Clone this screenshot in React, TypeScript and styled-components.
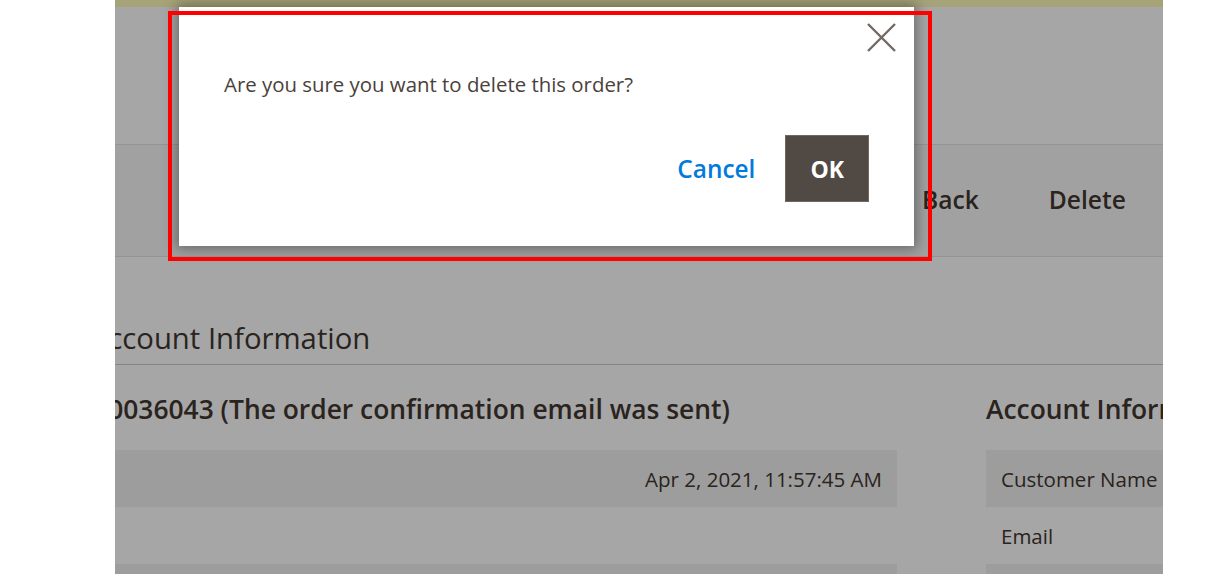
import React from 'react'
import styled, { createGlobalStyle } from 'styled-components'

const GlobalStyle = createGlobalStyle`
  html, body {
    margin: 0;
    padding: 0;
    background: #ffffff;
  }
  body {
    font-family: "Open Sans", "Noto Sans", sans-serif;
    color: #41362f;
  }
`

const Stage = styled.div`
  position: relative;
  width: 1215px;
  height: 574px;
  overflow: hidden;
  background: #ffffff;
`

const PageArea = styled.div`
  position: relative;
  margin-left: 115px;
  width: 1048px;
  height: 574px;
  overflow: hidden;
  background: #ffffff;
`

const NoticeBand = styled.div`
  height: 7px;
  background: #fffbbb;
`

const PageHeader = styled.div`
  height: 137px;
  border-bottom: 1px solid #e3e3e3;
`

const ActionBar = styled.div`
  display: flex;
  align-items: center;
  gap: 70px;
  height: 111px;
  padding-left: 807px;
  background: #f8f8f8;
  border-bottom: 1px solid #e3e3e3;
  white-space: nowrap;
`

const ActionButton = styled.span`
  font-size: 24.6px;
  font-weight: 600;
  color: #41362f;
  line-height: 1;
`

const Content = styled.div`
  display: grid;
  grid-template-columns: 925px 420px;
  column-gap: 89px;
  margin-left: -143px;
`

const SectionTitle = styled.h2`
  grid-column: 1 / -1;
  margin: 64px 0 0;
  padding-bottom: 8px;
  border-bottom: 1px solid #cccccc;
  font-size: 29.3px;
  font-weight: 400;
  line-height: 35px;
  color: #41362f;
  white-space: nowrap;
`

const Column = styled.div`
  display: flex;
  flex-direction: column;
`

const ColumnTitle = styled.h3`
  margin: 28px 0 25px;
  font-size: 26.4px;
  font-weight: 600;
  line-height: 32px;
  color: #41362f;
  white-space: nowrap;
`

const InfoRow = styled.div<{ $striped?: boolean }>`
  display: flex;
  justify-content: space-between;
  align-items: center;
  height: 57px;
  padding: 0 15px;
  background: ${(p) => (p.$striped ? '#f1f1f1' : 'transparent')};
  font-size: 20.5px;
  color: #41362f;
  white-space: nowrap;
`

const Overlay = styled.div`
  position: absolute;
  inset: 0;
  background: rgba(0, 0, 0, 0.35);
`

const Modal = styled.div`
  position: absolute;
  left: 179px;
  top: 7px;
  width: 735px;
  height: 239px;
  box-sizing: border-box;
  padding: 63px 45px 0;
  display: flex;
  flex-direction: column;
  background: #ffffff;
  box-shadow: 0 0 12px 3px rgba(0, 0, 0, 0.35);
`

const CloseButton = styled.button`
  position: absolute;
  top: 15px;
  right: 17px;
  width: 31px;
  height: 31px;
  padding: 0;
  border: none;
  background: transparent;
  cursor: pointer;
`

const Message = styled.p`
  margin: 0;
  font-size: 20.4px;
  line-height: 28px;
  color: #4a413b;
`

const Footer = styled.div`
  display: flex;
  justify-content: flex-end;
  align-items: center;
  gap: 30px;
  margin-top: 37px;
`

const LinkButton = styled.button`
  padding: 0;
  border: none;
  background: transparent;
  font-family: inherit;
  font-size: 24.4px;
  font-weight: 600;
  color: #007bdb;
  cursor: pointer;
`

const PrimaryButton = styled.button`
  height: 67px;
  padding: 0 24px;
  border: 1px solid #6f6862;
  background: #514943;
  font-family: inherit;
  font-size: 23px;
  font-weight: 700;
  color: #ffffff;
  cursor: pointer;
`

const Annotation = styled.div`
  position: absolute;
  left: 168px;
  top: 11px;
  width: 764px;
  height: 250px;
  box-sizing: border-box;
  border: 4px solid #ff0000;
  pointer-events: none;
`

const CloseIcon = (): React.ReactElement => (
  <svg width="31" height="31" viewBox="0 0 31 31" fill="none">
    <path d="M2 2 L29 29 M29 2 L2 29" stroke="#736963" strokeWidth="2.4" />
  </svg>
)

const App = (): React.ReactElement => {
  return (
    <>
      <GlobalStyle />
      <Stage>
        <PageArea>
          <NoticeBand />
          <PageHeader />
          <ActionBar>
            <ActionButton>Back</ActionButton>
            <ActionButton>Delete</ActionButton>
            <ActionButton>Cancel</ActionButton>
          </ActionBar>
          <Content>
            <SectionTitle>Order &amp; Account Information</SectionTitle>
            <Column>
              <ColumnTitle>Order # 000036043 (The order confirmation email was sent)</ColumnTitle>
              <InfoRow $striped>
                <span>Order Date</span>
                <span>Apr 2, 2021, 11:57:45 AM</span>
              </InfoRow>
              <InfoRow>
                <span>Order Status</span>
              </InfoRow>
              <InfoRow $striped>
                <span>Purchased From</span>
              </InfoRow>
            </Column>
            <Column>
              <ColumnTitle>Account Information</ColumnTitle>
              <InfoRow $striped>
                <span>Customer Name</span>
              </InfoRow>
              <InfoRow>
                <span>Email</span>
              </InfoRow>
              <InfoRow $striped>
                <span>Customer Group</span>
              </InfoRow>
            </Column>
          </Content>
          <Overlay />
        </PageArea>
        <Modal>
          <CloseButton aria-label="Close">
            <CloseIcon />
          </CloseButton>
          <Message>Are you sure you want to delete this order?</Message>
          <Footer>
            <LinkButton>Cancel</LinkButton>
            <PrimaryButton>OK</PrimaryButton>
          </Footer>
        </Modal>
        <Annotation />
      </Stage>
    </>
  )
}

export default App
